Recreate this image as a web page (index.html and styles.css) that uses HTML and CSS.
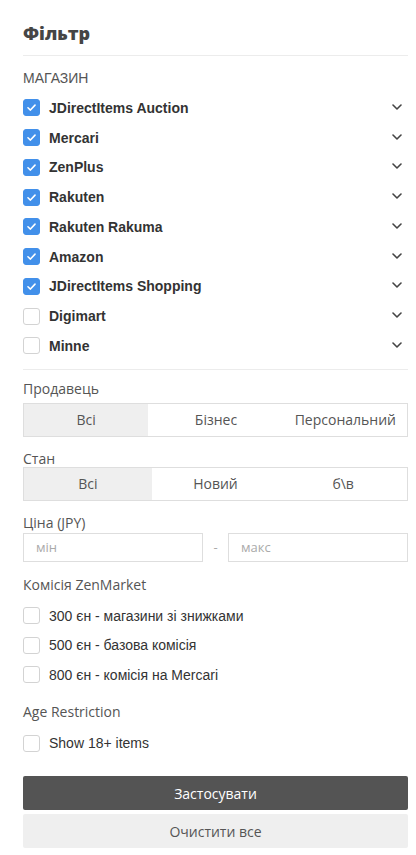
FILE: index.html
```html
<!DOCTYPE html>
<html lang="uk">
<head>
<meta charset="utf-8">
<title>Фільтр</title>
<link rel="stylesheet" href="styles.css">
</head>
<body>
<div class="panel">
  <h2 class="title">Фільтр</h2>

  <div class="section-head">МАГАЗИН</div>
  <ul class="stores">
    <li class="store"><span class="cb checked"><svg viewBox="0 0 17 17"><path d="M4.5 8.8 L7.3 11.4 L12.5 5.8" /></svg></span><span class="store-name">JDirectItems Auction</span><svg class="chev" viewBox="0 0 10 6"><path d="M1 1 L5 5 L9 1"/></svg></li>
    <li class="store"><span class="cb checked"><svg viewBox="0 0 17 17"><path d="M4.5 8.8 L7.3 11.4 L12.5 5.8" /></svg></span><span class="store-name">Mercari</span><svg class="chev" viewBox="0 0 10 6"><path d="M1 1 L5 5 L9 1"/></svg></li>
    <li class="store"><span class="cb checked"><svg viewBox="0 0 17 17"><path d="M4.5 8.8 L7.3 11.4 L12.5 5.8" /></svg></span><span class="store-name">ZenPlus</span><svg class="chev" viewBox="0 0 10 6"><path d="M1 1 L5 5 L9 1"/></svg></li>
    <li class="store"><span class="cb checked"><svg viewBox="0 0 17 17"><path d="M4.5 8.8 L7.3 11.4 L12.5 5.8" /></svg></span><span class="store-name">Rakuten</span><svg class="chev" viewBox="0 0 10 6"><path d="M1 1 L5 5 L9 1"/></svg></li>
    <li class="store"><span class="cb checked"><svg viewBox="0 0 17 17"><path d="M4.5 8.8 L7.3 11.4 L12.5 5.8" /></svg></span><span class="store-name">Rakuten Rakuma</span><svg class="chev" viewBox="0 0 10 6"><path d="M1 1 L5 5 L9 1"/></svg></li>
    <li class="store"><span class="cb checked"><svg viewBox="0 0 17 17"><path d="M4.5 8.8 L7.3 11.4 L12.5 5.8" /></svg></span><span class="store-name">Amazon</span><svg class="chev" viewBox="0 0 10 6"><path d="M1 1 L5 5 L9 1"/></svg></li>
    <li class="store"><span class="cb checked"><svg viewBox="0 0 17 17"><path d="M4.5 8.8 L7.3 11.4 L12.5 5.8" /></svg></span><span class="store-name">JDirectItems Shopping</span><svg class="chev" viewBox="0 0 10 6"><path d="M1 1 L5 5 L9 1"/></svg></li>
    <li class="store"><span class="cb"></span><span class="store-name">Digimart</span><svg class="chev" viewBox="0 0 10 6"><path d="M1 1 L5 5 L9 1"/></svg></li>
    <li class="store"><span class="cb"></span><span class="store-name">Minne</span><svg class="chev" viewBox="0 0 10 6"><path d="M1 1 L5 5 L9 1"/></svg></li>
  </ul>

  <div class="label label-seller">Продавець</div>
  <div class="segments seg-seller">
    <div class="seg active">Всі</div>
    <div class="seg">Бізнес</div>
    <div class="seg">Персональний</div>
  </div>

  <div class="label label-cond">Стан</div>
  <div class="segments">
    <div class="seg active">Всі</div>
    <div class="seg">Новий</div>
    <div class="seg">б\в</div>
  </div>

  <div class="label label-price">Ціна (JPY)</div>
  <div class="price">
    <input class="price-input" type="text" placeholder="мін">
    <span class="dash">-</span>
    <input class="price-input" type="text" placeholder="макс">
  </div>

  <div class="label label-fee">Комісія ZenMarket</div>
  <ul class="opts">
    <li class="opt"><span class="cb"></span><span class="opt-text">300 єн - магазини зі знижками</span></li>
    <li class="opt"><span class="cb"></span><span class="opt-text">500 єн - базова комісія</span></li>
    <li class="opt"><span class="cb"></span><span class="opt-text">800 єн - комісія на Mercari</span></li>
  </ul>

  <div class="label label-age">Age Restriction</div>
  <ul class="opts opts-age">
    <li class="opt"><span class="cb"></span><span class="opt-text">Show 18+ items</span></li>
  </ul>

  <button class="btn btn-apply" type="button">Застосувати</button>
  <button class="btn btn-clear" type="button">Очистити все</button>
</div>
</body>
</html>
```

FILE: styles.css
```css
* { box-sizing: border-box; }

html, body {
  margin: 0;
  padding: 0;
  background: #fff;
}

body {
  font-family: "Open Sans", "Liberation Sans", Arial, sans-serif;
  color: #555;
}

.panel {
  padding: 21px 8px 0 23px;
}

.title {
  margin: 0;
  font-family: "Open Sans", sans-serif;
  font-size: 18px;
  line-height: 24px;
  font-weight: 800;
  color: #454545;
  padding-bottom: 10px;
  border-bottom: 1px solid #ececec;
}

.section-head {
  margin-top: 12px;
  font-family: "Liberation Sans", Arial, sans-serif;
  font-size: 14px;
  line-height: 20px;
  color: #555;
}

.stores {
  list-style: none;
  margin: 5px 0 0;
  padding: 0 0 8px;
  border-bottom: 1px solid #ececec;
}

.store, .opt {
  display: flex;
  align-items: center;
  height: 29.75px;
}

.cb {
  flex: none;
  width: 17px;
  height: 17px;
  border: 1px solid #d3d3d3;
  border-radius: 3px;
  background: #fff;
  display: flex;
  align-items: center;
  justify-content: center;
}

.cb.checked {
  background: #4290ea;
  border-color: #4290ea;
}

.cb svg {
  width: 17px;
  height: 17px;
  fill: none;
  stroke: #fff;
  stroke-width: 1.8;
  stroke-linecap: round;
  stroke-linejoin: round;
}

.store-name {
  flex: 1;
  margin-left: 9px;
  font-family: "Liberation Sans", Arial, sans-serif;
  font-weight: bold;
  font-size: 14px;
  color: #333;
}

.chev {
  width: 10px;
  height: 6px;
  margin-right: 6px;
  margin-top: -2px;
  fill: none;
  stroke: #444;
  stroke-width: 1.6;
  stroke-linecap: round;
  stroke-linejoin: round;
}

.label {
  font-size: 14px;
  line-height: 20px;
  color: #555;
}

.label-seller { margin-top: 9px; margin-bottom: 4px; }
.label-cond { margin-top: 12px; margin-bottom: -2px; }
.label-price { margin-top: 12px; }
.label-fee { margin-top: 13px; margin-bottom: 6px; }
.label-age { margin-top: 13px; margin-bottom: 6px; }

.segments {
  display: grid;
  grid-template-columns: 1fr 1fr 1fr;
  border: 1px solid #dedede;
  height: 34px;
}

.seg-seller {
  grid-template-columns: 125fr 136fr 124fr;
}

.seg {
  display: flex;
  align-items: center;
  justify-content: center;
  font-size: 14px;
  color: #555;
}

.seg.active {
  background: #efefef;
}

.price {
  display: flex;
  align-items: center;
}

.price-input {
  flex: 1;
  min-width: 0;
  height: 29px;
  border: 1px solid #dedede;
  border-radius: 0;
  padding: 0 12px;
  font-family: "Open Sans", sans-serif;
  font-size: 13px;
  color: #555;
  background: #fff;
  outline: none;
}

.price-input::placeholder {
  color: #aaa;
}

.dash {
  width: 25px;
  text-align: center;
  font-size: 13px;
  color: #aaa;
}

.opts {
  list-style: none;
  margin: 0;
  padding: 0;
}

.opt { height: 29.5px; }
.opts-age .opt { height: 30px; }

.opt-text {
  margin-left: 9px;
  font-family: "Liberation Sans", Arial, sans-serif;
  font-size: 14px;
  color: #333;
}

.btn {
  display: block;
  width: 100%;
  height: 34px;
  border: 0;
  border-radius: 2px;
  font-family: "Open Sans", sans-serif;
  font-size: 14px;
  cursor: pointer;
}

.btn-apply {
  margin-top: 18px;
  background: #545454;
  color: #fff;
}

.btn-clear {
  margin-top: 4px;
  background: #efefef;
  color: #555;
}
```
